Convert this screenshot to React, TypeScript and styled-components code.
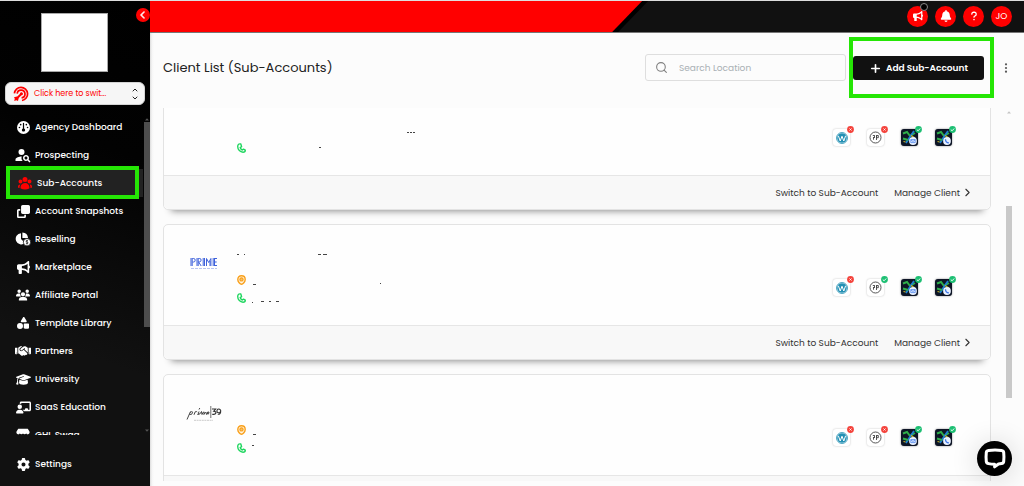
import React, { useLayoutEffect, useRef } from "react";
import styled, { createGlobalStyle, css } from "styled-components";
import {
  FaBell,
  FaBullhorn,
  FaChalkboardUser,
  FaChevronLeft,
  FaClone,
  FaGauge,
  FaGear,
  FaGraduationCap,
  FaHandshake,
  FaQuestion,
  FaShapes,
  FaStore,
  FaUsers,
} from "react-icons/fa6";
import { HiUserGroup } from "react-icons/hi2";
import { MdPersonSearch } from "react-icons/md";
import { FiChevronDown, FiChevronRight, FiChevronUp, FiPlus, FiSearch } from "react-icons/fi";

const RED = "#ff0000";
const INK = "#111111";
const MARK = "#25e605";

const GlobalStyle = createGlobalStyle`
  *, *::before, *::after { box-sizing: border-box; }
  body { margin: 0; background: #fcfcfc; font-family: Poppins, Inter, "Liberation Sans", sans-serif; }
  button { font: inherit; border: 0; padding: 0; background: none; cursor: pointer; }
  a { color: inherit; text-decoration: none; }
  svg { display: block; flex: none; }
`;

const Shell = styled.div`
  display: grid;
  grid-template-columns: 150px minmax(0, 1fr);
  height: 100vh;
  border-top: 1px solid #dedede;
`;

/* Sidebar */

const Sidebar = styled.aside`
  position: relative;
  display: flex;
  flex-direction: column;
  min-height: 0;
  background: linear-gradient(200deg, #000 0%, #020202 30%, #111 70%);
`;

const BrandBox = styled.div`
  width: 67px;
  height: 59px;
  margin: 12px 0 0 41px;
  background: #fff;
  border: 1px solid #a9a9a9;
`;

const CollapseButton = styled.button`
  position: absolute;
  top: 7px;
  right: 0;
  width: 14px;
  height: 14px;
  display: grid;
  place-items: center;
  color: #fff;
  background: ${RED};
  border-radius: 50%;
  font-size: 8px;

  svg {
    stroke: #fff;
    stroke-width: 40px;
  }
`;

const Switcher = styled.button`
  display: flex;
  align-items: center;
  gap: 5px;
  height: 23px;
  margin: 10px 5px 8px;
  padding: 0 5px 0 7px;
  background: #f6f6f6;
  border: 1px solid #d4d4d4;
  border-radius: 6px;
  color: ${RED};
  font-size: 8px;
  line-height: 12px;
`;

const SwitcherLabel = styled.span`
  flex: 1;
  text-align: left;
  white-space: nowrap;
`;

const Arrows = styled.span`
  display: flex;
  flex-direction: column;
  color: #222;
  font-size: 8px;
`;

const NavArea = styled.div`
  display: flex;
  flex: 1;
  min-height: 0;
`;

const NavList = styled.nav`
  flex: 1;
  min-width: 0;
  overflow: hidden;
`;

const NavLink = styled.a<{ $active?: boolean }>`
  position: relative;
  display: flex;
  align-items: center;
  gap: 4px;
  height: 28px;
  padding-left: 15px;
  color: #fff;
  font-size: 9px;
  font-weight: 500;
  line-height: 14px;
  white-space: nowrap;

  ${({ $active }) =>
    $active &&
    css`
      padding-left: 17px;
      background: linear-gradient(90deg, transparent 8px, #222 8px);

      > span:first-child {
        color: ${RED};
      }

      &::after {
        content: "";
        position: absolute;
        inset: -3px 4px -2px 6px;
        border: 4px solid ${MARK};
      }
    `}
`;

const NavIcon = styled.span`
  display: flex;
  align-items: center;
  justify-content: center;
  width: 16px;
  height: 16px;
`;

const ScrollRail = styled.div<{ $dark?: boolean }>`
  display: flex;
  flex-direction: column;
  align-items: center;
  width: 7px;
  padding: ${({ $dark }) => ($dark ? "5px 0 3px" : "3px 0")};
  color: ${({ $dark }) => ($dark ? "#555" : "#c4c4c4")};
`;

const RailThumb = styled.div<{ $before: number; $size: number; $color: string }>`
  width: 6px;
  flex: ${({ $size }) => $size} 0 0;
  margin-top: ${({ $before }) => $before}px;
  background: ${({ $color }) => $color};
`;

const RailRest = styled.div<{ $size: number }>`
  flex: ${({ $size }) => $size} 0 0;
`;

const SidebarFooter = styled.div`
  height: 51px;
  padding-top: 15px;
`;

/* Main column */

const Main = styled.div`
  display: flex;
  flex-direction: column;
  min-width: 0;
  min-height: 0;
`;

const TopBar = styled.header`
  display: flex;
  justify-content: space-between;
  flex: none;
  height: 32px;
  background: ${INK};
  border-bottom: 1px solid #777;
`;

const slant = css`
  clip-path: polygon(0 0, 100% 0, calc(100% - 30px) 100%, 0 100%);
`;

const Banner = styled.div`
  width: 57%;
  padding-right: 6px;
  background: #000;
  ${slant}
`;

const BannerFill = styled.div`
  height: 100%;
  background: ${RED};
  ${slant}
`;

const TopActions = styled.div`
  display: flex;
  align-items: center;
  gap: 7px;
  padding: 0 12px 1px 0;
`;

const RoundButton = styled.button`
  position: relative;
  display: grid;
  place-items: center;
  width: 21px;
  height: 21px;
  border-radius: 50%;
  background: ${RED};
  color: #fff;
  font-size: 9px;
  line-height: 12px;
`;

const Dot = styled.span`
  position: absolute;
  top: -3px;
  right: 0;
  width: 8px;
  height: 8px;
  border-radius: 50%;
  background: #000;
  border: 1px solid #8a8a8a;
`;

const Page = styled.main`
  display: flex;
  flex-direction: column;
  flex: 1;
  min-height: 0;
  padding: 0 12px 5px 13px;
  background: linear-gradient(90deg, #dcdcdc 0, #f6f6f6 2px, #fcfcfc 4px);
`;

const TitleRow = styled.div`
  display: flex;
  align-items: center;
  flex: none;
  height: 75px;
  padding: 0 1px 6px 0;
`;

const Title = styled.h1`
  flex: 1;
  margin: 0;
  color: #222;
  font-size: 13px;
  font-weight: 400;
  line-height: 20px;
`;

const SearchBox = styled.label`
  display: flex;
  align-items: center;
  gap: 11px;
  width: 201px;
  height: 27px;
  padding: 0 9px;
  border: 1px solid #dedede;
  border-radius: 3px;
  color: #808080;
  font-size: 13px;
`;

const SearchInput = styled.input`
  flex: 1;
  min-width: 0;
  padding: 0;
  border: 0;
  outline: 0;
  background: none;
  font: inherit;
  font-size: 9px;
  line-height: 14px;
  color: #333;

  &::placeholder {
    color: #a9b0b4;
    opacity: 1;
  }
`;

const AddWrap = styled.div`
  display: flex;
  margin: 0 7px 0 3px;
  padding: 15px 6px 14px 0;
  border: 4px solid ${MARK};
`;

const AddButton = styled.button`
  display: flex;
  align-items: center;
  justify-content: center;
  gap: 4px;
  width: 131px;
  height: 24px;
  border-radius: 3px;
  background: ${INK};
  color: #fff;
  font-size: 9px;
  font-weight: 600;
  line-height: 14px;
  white-space: nowrap;

  svg {
    font-size: 13px;
  }
`;

const MenuButton = styled.button`
  display: grid;
  place-items: center;
  width: 10px;
  height: 16px;
`;

const ListArea = styled.div`
  display: flex;
  gap: 14px;
  flex: 1;
  min-height: 0;
`;

const CardList = styled.div`
  display: flex;
  flex-direction: column;
  gap: 14px;
  flex: 1;
  min-width: 0;
  overflow: hidden;
`;

const Card = styled.article`
  flex: none;
  background: #fefefe;
  border: 1px solid #e3e3e3;
  border-radius: 5px;
  box-shadow: 0 9px 7px -8px rgba(0, 0, 0, 0.45);
`;

const CardBody = styled.div`
  display: flex;
  align-items: flex-start;
  height: 101px;
  padding: 0 38px 0 20px;
  border-bottom: 1px solid #e6e6e6;
`;

const ClientLogo = styled.div`
  display: grid;
  place-items: center;
  width: 40px;
  height: 20px;
  margin-top: 28px;
`;

const ClientInfo = styled.div`
  flex: 1;
  display: flex;
  flex-direction: column;
  gap: 7px;
  margin-left: 13px;
  padding-top: 26px;
`;

const NameLine = styled.div`
  height: 16px;
`;

const InfoLine = styled.div`
  display: flex;
  align-items: center;
  gap: 6px;
  height: 11px;
`;

const Apps = styled.div`
  display: flex;
  gap: 17px;
  padding-top: 54px;
`;

const AppTile = styled.span<{ $dark?: boolean }>`
  position: relative;
  display: grid;
  place-items: center;
  width: 17px;
  height: 17px;
  border-radius: 3px;
  background: ${({ $dark }) => ($dark ? "#0d1526" : "#fff")};
  box-shadow: 0 0 2px ${({ $dark }) => ($dark ? "rgba(0,0,0,.5)" : "rgba(0,0,0,.25)")};
`;

const Badge = styled.span`
  position: absolute;
  top: -3px;
  right: -4px;
`;

const CardFooter = styled.div`
  display: flex;
  align-items: center;
  justify-content: flex-end;
  gap: 16px;
  height: 33px;
  padding-right: 16px;
  background: #f8f8f8;
  border-radius: 0 0 5px 5px;
  color: #333;
  font-size: 9px;
  line-height: 14px;
`;

const FooterLink = styled.a`
  display: flex;
  align-items: center;
  gap: 1px;
  white-space: nowrap;

  svg {
    font-size: 13px;
  }
`;

const ChatButton = styled.button`
  position: fixed;
  right: 12px;
  bottom: 10px;
  width: 35px;
  height: 35px;
  display: grid;
  place-items: center;
  border-radius: 50%;
  background: #000;
  box-shadow: 0 2px 28px rgba(0, 0, 0, 0.16);
`;

/* Drawings */

const TargetIcon = () => (
  <svg width="16" height="16" viewBox="0 0 16 16" fill="none" stroke={RED} strokeWidth="1.7">
    <path d="M1.4 7.4A6.6 6.6 0 1 1 9 14.5" />
    <path d="M4.2 7.6A3.9 3.9 0 1 1 8.6 11.8" />
    <path d="M9 7.2 3 13.2" strokeWidth="2" />
    <path d="M1 11.2 4 10.6 5.6 12.2 5 15 3.4 14.2 1.2 15 1.8 12.8Z" fill={RED} stroke="none" />
    <circle cx="8.4" cy="7.8" r="1.5" fill={RED} stroke="none" />
  </svg>
);

const PieCoinIcon = () => (
  <svg width="16" height="14" viewBox="0 0 16 14">
    <g fill="#fff">
      <path d="M6 1.2V7l4 4a5.6 5.6 0 1 1-4-9.8Z" />
      <path d="M7.4.4A6 6 0 0 1 13 6H7.4Z" />
    </g>
    <circle cx="12" cy="10.2" r="3.7" fill="#fff" stroke="#111" strokeWidth=".8" />
    <path d="M13 8.9c-.5-.6-2-.5-2 .3 0 .9 2.1.7 2.1 1.7 0 .8-1.6 1-2.2.3M12 8v4.5" fill="none" stroke="#111" strokeWidth=".7" />
  </svg>
);

const PinIcon = () => (
  <svg width="9" height="10" viewBox="0 0 9 10">
    <path d="M4.5.7C2.2.7.8 2.3.8 4.4c0 2.4 2.4 4.9 3.7 4.9s3.7-2.5 3.7-4.9C8.2 2.3 6.8.7 4.5.7Z" fill="#fff4e0" stroke="#f9a01b" strokeWidth="1.4" />
    <circle cx="4.5" cy="4.4" r="1.6" fill="#fbc063" stroke="#f9a01b" strokeWidth="1.2" />
  </svg>
);

const HandsetIcon = () => (
  <svg width="9" height="10" viewBox="0 0 9 10" fill="none" stroke="#1fd65f" strokeWidth="1.4" strokeLinejoin="round">
    <path d="M3.8 1C2 .5.7 1.4.7 3.6c0 3.2 2.5 5.5 5.3 5.6 1.4 0 2.300-.7 2.300-2L6.500 6.200 5.300 7C4.300 6.500 3.500 5.700 3.200 4.600L4.600 3.600Z" />
  </svg>
);

const WordpressIcon = () => (
  <svg width="12" height="12" viewBox="0 0 12 12" fill="none">
    <circle cx="6" cy="6" r="5.5" fill="#fff" stroke="#2390b4" strokeWidth=".8" />
    <circle cx="6" cy="6" r="4.8" fill="#2390b4" />
    <path d="M2.4 3.8 4.2 9 6 4.2 7.800 9 9.600 3.800" stroke="#fff" strokeWidth="1" />
  </svg>
);

const KebabIcon = () => (
  <svg width="4" height="10" viewBox="0 0 4 10" fill="#555">
    <circle cx="2" cy="1.3" r="1.1" />
    <circle cx="2" cy="5" r="1.1" />
    <circle cx="2" cy="8.7" r="1.1" />
  </svg>
);

const RailArrow = ({ down = false }: { down?: boolean }) => (
  <svg width="4" height="3" viewBox="0 0 4 3" fill="currentColor">
    <path d={down ? "M0 .5h4L2 2.8Z" : "M0 2.5h4L2 .2Z"} />
  </svg>
);

const StatusBadge = ({ ok }: { ok: boolean }) => (
  <Badge>
    <svg width="7" height="7" viewBox="0 0 7 7" fill="none" stroke="#fff" strokeWidth=".9">
      <circle cx="3.5" cy="3.5" r="3.4" fill={ok ? "#1dbf73" : "#f4433c"} stroke="none" />
      <path d={ok ? "M1.800 3.600 3.100 4.800 5.200 2.500" : "M2.500 2.500 4.500 4.500M4.500 2.500 2.500 4.500"} />
    </svg>
  </Badge>
);

const ListingIcon = () => (
  <svg width="13" height="13" viewBox="0 0 13 13" fill="none" stroke="#444">
    <circle cx="6.5" cy="6.5" r="5.5" strokeWidth=".9" />
    <path d="M3.800 4.500h2M5.500 4.500v2M4 6.500h2M4.500 6.500v2.200M7.500 4.500h1.800v2.200H7.500ZM7.500 4.200v4.800" strokeWidth=".9" />
  </svg>
);

const MapArt = ({ kind }: { kind: "mail" | "call" }) => (
  <svg width="17" height="17" viewBox="0 0 17 17" fill="none">
    <path d="M2 4.500 6 3l3 4 5-3" stroke="#2fae4a" strokeWidth="2" />
    <path d="M13 2 9.500 7 5 14" stroke="#1d7fd0" strokeWidth="1.800" />
    <path d="m2 9.500 5 1.500" stroke="#2fae4a" strokeWidth="2" />
    <path d="M10 6.500 14 9M2.500 12.500l2 .5" stroke="#c8b52e" strokeWidth="1.200" />
    <circle cx="12" cy="12" r="3.900" fill="#e8f0ff" />
    {kind === "mail" ? (
      <path d="M9.800 10.600h4.400v3H9.800ZM9.800 10.800 12 12.500l2.200-1.700" stroke="#3e78e8" strokeWidth=".7" />
    ) : (
      <path d="M10.500 10.200c0 2.200 1.200 3.500 3.400 3.600" stroke="#3e78e8" strokeWidth="1.300" />
    )}
  </svg>
);

const PrimeLogo = () => (
  <svg width="28" height="13" viewBox="0 0 28 13" fill="none" stroke="#3f62db">
    <path
      d="M1 1v8M2.200 1v8M2.500 1.500h1.200q1.500 0 1.500 1.700T3.700 5H2.500M7 1v8M8.200 1v8M8.500 1.500h1.200q1.400 0 1.400 1.600T9.700 4.800H8.500l2.700 4.200M13.200 1v8M14.500 1v8M16.500 9V1.500l2.200 4 2.200-4V9M20 4v5M23.200 1v8M24.500 1v8M24.500 1.500H27M24.500 5h2.200M24.500 8.500H27"
      strokeWidth="1"
    />
    <path d="M1 11.500h26" stroke="#b9c5f2" strokeDasharray="3 1" />
  </svg>
);

const Prime39Logo = () => (
  <svg width="36" height="20" viewBox="0 0 36 20" fill="none" stroke="#333" strokeWidth=".9">
    <path d="M1 16.500 4.500 8.500M4.200 9.500q2.500-2 2.300.2T3.500 11.500M8 11.800l1.200-3q1.600-.6 2 .2M12 11.500l1-3M11.500 11.500q3 .2 4-3l.5 3q1.500-3.500 2.200-2.500l-.3 2.500q1.700-3 2.300-2l.2 1.900q2.800-1 2.600-2.300-1.700-.8-1.700 1.200.7 1.500 2-.2M13 6.500l.8-1.500" />
    <path d="M24.800 3v12" strokeWidth=".7" />
    <path d="M26 6h3.600L27.700 8.300q2.400 0 2.200 1.700-.7 2-3.700 1.200M34.700 8.200a1.900 1.900 0 1 1 0-.6c.2 2.800-1 3.900-2.900 3.700" strokeWidth="1.100" />
    <path d="M8 17.300h19" stroke="#aaa" strokeWidth=".6" strokeDasharray="2 .6" />
  </svg>
);

const ChatIcon = () => (
  <svg width="24" height="24" viewBox="0 0 24 24" fill="none" stroke="#fff" strokeWidth="3" strokeLinejoin="round">
    <path d="M5.500 3.500Q12 2.600 18.500 3.500 20.500 3.800 20.700 5.500 21.200 10 20.700 14.500 20.500 16.300 18.500 16.600L15.500 17 11.600 19.800V17.200Q8.500 17.200 5.500 16.600 3.500 16.300 3.300 14.500 2.800 10 3.300 5.500 3.500 3.800 5.500 3.500Z" />
  </svg>
);

/* Leftover ink on each redacted line: x, y, width */
type Ink = [number, number, number][];

const Redacted = ({ marks }: { marks: Ink }) => (
  <svg width="170" height="11" viewBox="0 0 170 11" fill="#444">
    {marks.map(([x, y, w]) => (
      <rect key={`${x}-${y}`} x={x} y={y} width={w} height="1" />
    ))}
  </svg>
);

/* Data */

const navItems = [
  { label: "Agency Dashboard", icon: <FaGauge size={13} /> },
  { label: "Prospecting", icon: <MdPersonSearch size={18} /> },
  { label: "Sub-Accounts", icon: <HiUserGroup size={16} />, active: true },
  { label: "Account Snapshots", icon: <FaClone size={13} /> },
  { label: "Reselling", icon: <PieCoinIcon /> },
  { label: "Marketplace", icon: <FaBullhorn size={13} /> },
  { label: "Affiliate Portal", icon: <FaUsers size={14} /> },
  { label: "Template Library", icon: <FaShapes size={12} /> },
  { label: "Partners", icon: <FaHandshake size={16} /> },
  { label: "University", icon: <FaGraduationCap size={15} /> },
  { label: "SaaS Education", icon: <FaChalkboardUser size={15} /> },
  { label: "GHL Swag", icon: <FaStore size={14} /> },
];

type Client = {
  id: string;
  logo?: React.ReactNode;
  pin: boolean;
  listing: boolean;
  name: Ink;
  address: Ink;
  phone: Ink;
};

const clients: Client[] = [
  { id: "a", pin: false, listing: false, name: [], address: [[155, 8, 2], [158, 8, 2], [161, 8, 2]], phone: [[67, 5, 2]] },
  { id: "b", logo: <PrimeLogo />, pin: true, listing: true, name: [[0, 3, 2], [7, 3, 1], [81, 3, 3], [86, 3, 4]], address: [[1, 10, 3], [128, 9, 1]], phone: [[0, 10, 1], [9, 9, 3], [17, 9, 2], [24, 9, 3]] },
  { id: "c", logo: <Prime39Logo />, pin: true, listing: false, name: [], address: [[1, 10, 3]], phone: [[0, 3, 2]] },
];

const ClientCard = ({ client }: { client: Client }) => (
  <Card>
    <CardBody>
      <ClientLogo>{client.logo}</ClientLogo>
      <ClientInfo>
        <NameLine>
          <Redacted marks={client.name} />
        </NameLine>
        <InfoLine>
          {client.pin ? <PinIcon /> : <svg width="9" height="10" />}
          <Redacted marks={client.address} />
        </InfoLine>
        <InfoLine>
          <HandsetIcon />
          <Redacted marks={client.phone} />
        </InfoLine>
      </ClientInfo>
      <Apps>
        <AppTile>
          <WordpressIcon />
          <StatusBadge ok={false} />
        </AppTile>
        <AppTile>
          <ListingIcon />
          <StatusBadge ok={client.listing} />
        </AppTile>
        <AppTile $dark>
          <MapArt kind="mail" />
          <StatusBadge ok />
        </AppTile>
        <AppTile $dark>
          <MapArt kind="call" />
          <StatusBadge ok />
        </AppTile>
      </Apps>
    </CardBody>
    <CardFooter>
      <FooterLink href="#switch">Switch to Sub-Account</FooterLink>
      <FooterLink href="#manage">
        Manage Client <FiChevronRight />
      </FooterLink>
    </CardFooter>
  </Card>
);

export default function App() {
  const listRef = useRef<HTMLDivElement>(null);

  useLayoutEffect(() => {
    if (listRef.current) listRef.current.scrollTop = 34;
  }, []);

  return (
    <>
      <GlobalStyle />
      <Shell>
        <Sidebar>
          <BrandBox />
          <CollapseButton aria-label="Collapse sidebar">
            <FaChevronLeft />
          </CollapseButton>
          <Switcher>
            <TargetIcon />
            <SwitcherLabel>Click here to swit...</SwitcherLabel>
            <Arrows>
              <FiChevronUp strokeWidth={3} />
              <FiChevronDown strokeWidth={3} />
            </Arrows>
          </Switcher>
          <NavArea>
            <NavList aria-label="Agency">
              {navItems.map(({ label, icon, active }) => (
                <NavLink key={label} href="#nav" $active={active}>
                  <NavIcon>{icon}</NavIcon>
                  {label}
                </NavLink>
              ))}
            </NavList>
            <ScrollRail $dark>
              <RailArrow />
              <RailThumb $before={1} $size={206} $color="#4d4d4d" />
              <RailRest $size={102} />
              <RailArrow down />
            </ScrollRail>
          </NavArea>
          <SidebarFooter>
            <NavLink href="#settings">
              <NavIcon>
                <FaGear size={13} />
              </NavIcon>
              Settings
            </NavLink>
          </SidebarFooter>
        </Sidebar>

        <Main>
          <TopBar>
            <Banner>
              <BannerFill />
            </Banner>
            <TopActions>
              <RoundButton aria-label="Announcements">
                <FaBullhorn size={10} />
                <Dot />
              </RoundButton>
              <RoundButton aria-label="Notifications">
                <FaBell size={12} />
              </RoundButton>
              <RoundButton aria-label="Help">
                <FaQuestion size={10} />
              </RoundButton>
              <RoundButton>JO</RoundButton>
            </TopActions>
          </TopBar>

          <Page>
            <TitleRow>
              <Title>Client List (Sub-Accounts)</Title>
              <SearchBox>
                <FiSearch />
                <SearchInput type="search" placeholder="Search Location" aria-label="Search Location" />
              </SearchBox>
              <AddWrap>
                <AddButton>
                  <FiPlus strokeWidth={3} />
                  Add Sub-Account
                </AddButton>
              </AddWrap>
              <MenuButton aria-label="More options">
                <KebabIcon />
              </MenuButton>
            </TitleRow>
            <ListArea>
              <CardList ref={listRef}>
                {clients.map((client) => (
                  <ClientCard key={client.id} client={client} />
                ))}
              </CardList>
              <ScrollRail>
                <RailArrow />
                <RailRest $size={92} />
                <RailThumb $before={0} $size={192} $color="#c9c9c9" />
                <RailRest $size={80} />
              </ScrollRail>
            </ListArea>
          </Page>
        </Main>
      </Shell>
      <ChatButton aria-label="Open chat">
        <ChatIcon />
      </ChatButton>
    </>
  );
}
